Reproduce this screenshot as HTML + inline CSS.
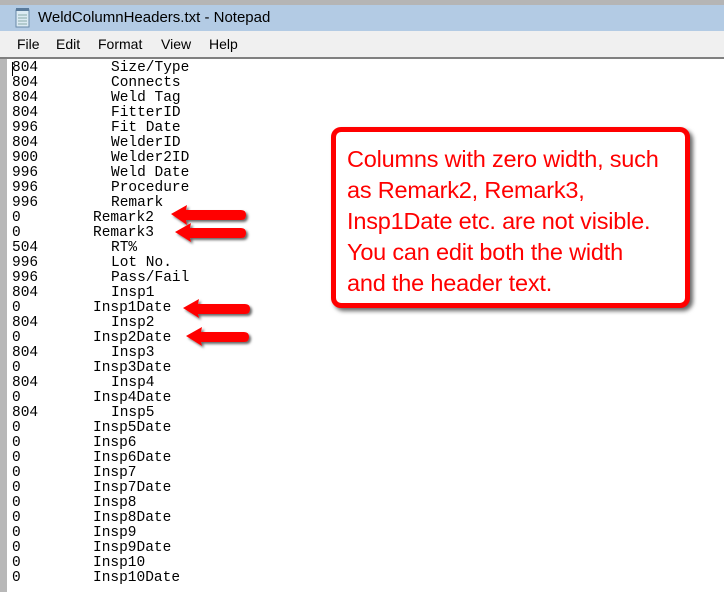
<!DOCTYPE html>
<html><head><style>
body{margin:0;width:724px;height:592px;overflow:hidden;background:#fff;position:relative;font-family:"Liberation Sans",sans-serif}
.tb{position:absolute;left:0;top:0;width:724px;height:5px;background:#b5b5b5}
.title{position:absolute;left:0;top:5px;width:724px;height:26px;background:#b3cbe4}
.title span{position:absolute;left:38px;top:4px;font-size:15px;color:#000}
.menu{position:absolute;left:0;top:31px;width:724px;height:26px;background:#f0f0f0;font-size:14px}
.menu span{position:absolute;top:5px}
.sep{position:absolute;left:0;top:57px;width:724px;height:2px;background:#808080}
.lb{position:absolute;left:0;width:7px;background:#b8b8b8}
.txt{position:absolute;font-family:"Liberation Mono",monospace;font-size:14.5px;line-height:15px;color:#000;white-space:pre}
.box{position:absolute;left:331px;top:127px;width:349px;height:171px;border:5px solid #f00;border-radius:10px;box-shadow:3px 3px 4px rgba(0,0,0,.6);background:#fff}
.box div{position:absolute;left:11px;top:12px;font-size:23.5px;line-height:31px;color:#f00;white-space:pre;letter-spacing:-0.2px}
</style></head><body>
<div class="tb"></div>
<div class="title">
<svg style="position:absolute;left:15px;top:3px" width="16" height="20"><rect x="1" y="2" width="13" height="17" fill="#dbeaf3" stroke="#6a8aa8"/><g stroke="#8aa" stroke-width="1"><line x1="3" y1="7" x2="12" y2="7"/><line x1="3" y1="10" x2="12" y2="10"/><line x1="3" y1="13" x2="12" y2="13"/><line x1="3" y1="16" x2="12" y2="16"/></g><rect x="1" y="0" width="13" height="3" fill="#5a7a9a"/></svg>
<span>WeldColumnHeaders.txt - Notepad</span></div>
<div class="menu"><span style="left:17px">File</span><span style="left:56px">Edit</span><span style="left:98px">Format</span><span style="left:161px">View</span><span style="left:209px">Help</span></div>
<div class="sep"></div>
<div class="lb" style="top:59px;height:533px"></div>
<div style="position:absolute;left:12px;top:62px;width:1px;height:14px;background:#000"></div>
<div class="txt" style="left:12px;top:61px">804
804
804
804
996
804
900
996
996
996
0
0
504
996
996
804
0
804
0
804
0
804
0
804
0
0
0
0
0
0
0
0
0
0
0</div>
<div class="txt" style="left:111px;top:61px">Size/Type
Connects
Weld Tag
FitterID
Fit Date
WelderID
Welder2ID
Weld Date
Procedure
Remark


RT%
Lot No.
Pass/Fail
Insp1

Insp2

Insp3

Insp4

Insp5</div>
<div class="txt" style="left:93px;top:61px">









Remark2
Remark3




Insp1Date

Insp2Date

Insp3Date

Insp4Date

Insp5Date
Insp6
Insp6Date
Insp7
Insp7Date
Insp8
Insp8Date
Insp9
Insp9Date
Insp10
Insp10Date</div>
<svg style="position:absolute;left:0;top:0" width="724" height="592">
<defs><filter id="s"><feDropShadow dx="2" dy="2" stdDeviation="1.2" flood-color="#000" flood-opacity=".6"/></filter></defs>
<g fill="#f00" filter="url(#s)">
<path d="M171 214 L187 205 L186 210 L241 210 Q246 210 246 215 Q246 220 241 220 L186 220 L187 225 Z"/>
<path d="M175 232 L191 223 L190 228 L241 228 Q246 228 246 233 Q246 238 241 238 L190 238 L191 242 Z"/>
<path d="M183 308 L199 299 L198 304 L245 304 Q250 304 250 309 Q250 314 245 314 L198 314 L199 318 Z"/>
<path d="M186 336 L202 327 L201 332 L244 332 Q249 332 249 337 Q249 342 244 342 L201 342 L202 346 Z"/>
</g></svg>
<div class="box"><div>Columns with zero width, such
as Remark2, Remark3,
Insp1Date etc. are not visible.
You can edit both the width
and the header text.</div></div>
</body></html>
